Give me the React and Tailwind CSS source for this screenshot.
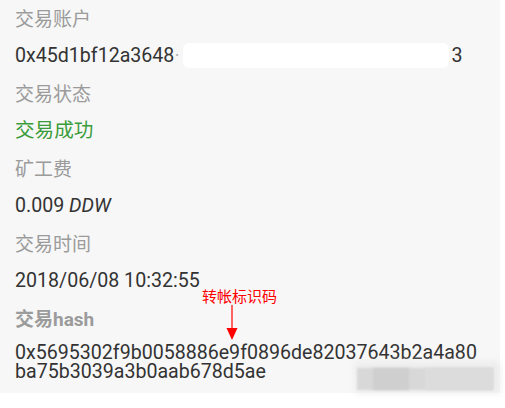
import React from "react";

const font = { fontFamily: 'Roboto, "Noto Sans CJK SC", sans-serif' };

function Item({ label, children, bold }) {
  return (
    <div className="flex flex-col h-[75px]">
      <div className={`text-[19px] leading-[26px] text-[#9b9b9b] ${bold ? "font-bold" : ""}`}>{label}</div>
      <div className="mt-[12.5px] text-[19.6px] leading-[19px] text-[#333333]">{children}</div>
    </div>
  );
}

export default function App() {
  return (
    <div className="relative w-[505px] h-[408px] bg-white overflow-hidden" style={font}>
      <div className="w-[500px] h-[393px] bg-[#f7f7f7] pl-[15px] pt-[7px] flex flex-col">
        <Item label="交易账户">
          <span>0x45d1bf12a3648</span>
          <span className="text-[#b5b5b5]">·</span>
          <span className="inline-block align-middle ml-[3px] w-[266px] h-[25px] bg-white rounded-[6px] -mt-[3px]"></span>
          <span className="ml-[3px]">3</span>
        </Item>
        <Item label="交易状态">
          <span className="text-[#3a9c3a]">交易成功</span>
        </Item>
        <Item label="矿工费">
          0.009 <span className="italic">DDW</span>
        </Item>
        <Item label="交易时间">2018/06/08 10:32:55</Item>
        <div className="flex flex-col">
          <div className="text-[19px] leading-[26px] text-[#9b9b9b] font-bold">交易hash</div>
          <div className="mt-[9.5px] text-[19.6px] leading-[19px] text-[#333333]">
            <div>0x5695302f9b0058886e9f0896de82037643b2a4a80</div>
            <div>ba75b3039a3b0aab678d5ae</div>
          </div>
        </div>
      </div>

      {/* annotation */}
      <div className="absolute left-[202px] top-[287px] text-[15px] leading-[20px] text-[#ff0000]" style={font}>
        转帐标识码
      </div>
      <svg className="absolute left-[224px] top-[305px]" width="16" height="36" viewBox="0 0 16 36">
        <line x1="8" y1="0" x2="8" y2="25" stroke="#ff0000" strokeWidth="1.2" />
        <polygon points="2.5,23 13.5,23 8,35" fill="#ff0000" />
      </svg>

      {/* blurred watermark */}
      <div className="absolute left-[355px] top-[362px] w-[145px] h-[31px] bg-[#ececec] blur-[3px]"></div>
      <div className="absolute left-[357px] top-[368px] w-[136px] h-[22px] bg-[#d8d8d8] blur-[1px]"></div>
      <div className="absolute left-[373px] top-[368px] w-[36px] h-[22px] bg-[#cfcfcf] blur-[1px]"></div>
      <div className="absolute left-[425px] top-[368px] w-[68px] h-[22px] bg-[#dcdcdc] blur-[1px]"></div>
    </div>
  );
}
